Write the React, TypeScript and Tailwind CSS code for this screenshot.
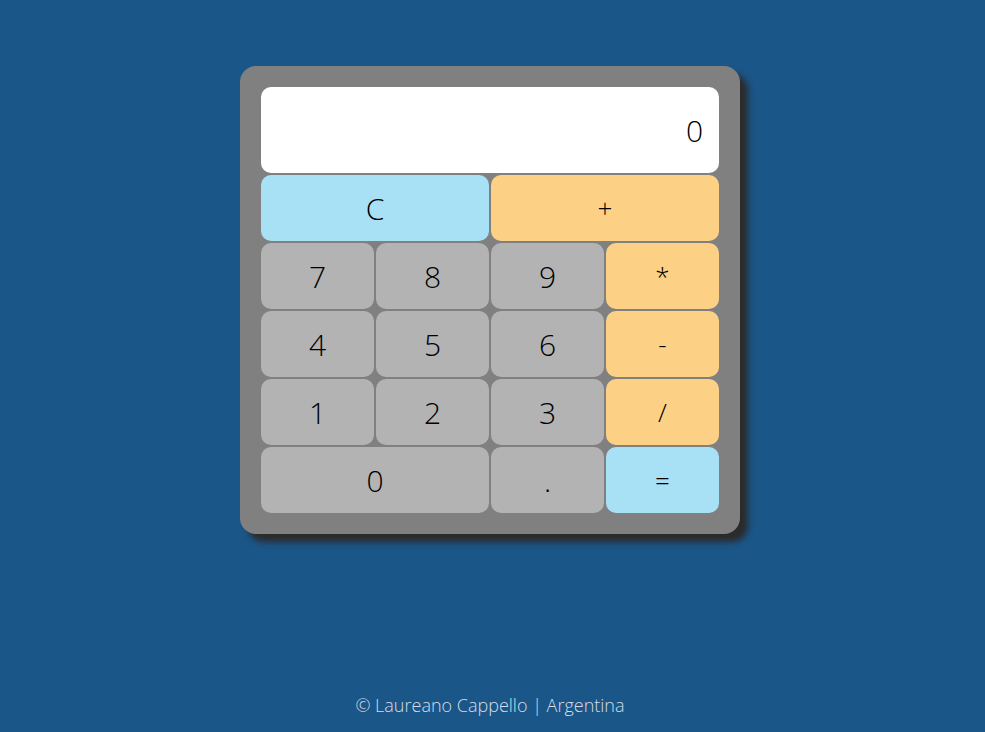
const rows: { label: string; kind: 'num' | 'op' | 'eq' | 'clear'; span?: boolean }[][] = [
  [
    { label: 'C', kind: 'clear', span: true },
    { label: '+', kind: 'op', span: true },
  ],
  [
    { label: '7', kind: 'num' },
    { label: '8', kind: 'num' },
    { label: '9', kind: 'num' },
    { label: '*', kind: 'op' },
  ],
  [
    { label: '4', kind: 'num' },
    { label: '5', kind: 'num' },
    { label: '6', kind: 'num' },
    { label: '-', kind: 'op' },
  ],
  [
    { label: '1', kind: 'num' },
    { label: '2', kind: 'num' },
    { label: '3', kind: 'num' },
    { label: '/', kind: 'op' },
  ],
  [
    { label: '0', kind: 'num', span: true },
    { label: '.', kind: 'num' },
    { label: '=', kind: 'eq' },
  ],
];

const bg = {
  num: 'bg-[#b3b3b3] text-[30px]',
  op: 'bg-[#fcd185] text-[26px]',
  eq: 'bg-[#a8e1f5] text-[26px]',
  clear: 'bg-[#a8e1f5] text-[30px]',
};

export default function App() {
  return (
    <div
      className="min-h-[732px] bg-[#1b5688] flex flex-col items-center"
      style={{ fontFamily: '"Open Sans", "Noto Sans", sans-serif' }}
    >
      <div className="mt-[66px] mr-[5px] w-[500px] bg-[#808080] rounded-[16px] p-[21px] shadow-[8px_8px_6px_#2b2b2b]">
        <div className="h-[86px] bg-white rounded-[10px] flex items-center justify-end pr-[16px] text-[30px] font-light text-black">
          0
        </div>
        <div className="mt-[2px] grid grid-cols-4 gap-[2px]">
          {rows.flat().map((b) => (
            <button
              key={b.label}
              className={`h-[66px] rounded-[10px] flex items-center justify-center font-light text-black ${bg[b.kind]} ${b.span ? 'col-span-2' : ''}`}
            >
              {b.label}
            </button>
          ))}
        </div>
      </div>
      <div className="mt-[158px] mr-[5px] text-[18px] font-light text-[#d5dde6]">
        © Laureano Cappello | Argentina
      </div>
    </div>
  );
}
